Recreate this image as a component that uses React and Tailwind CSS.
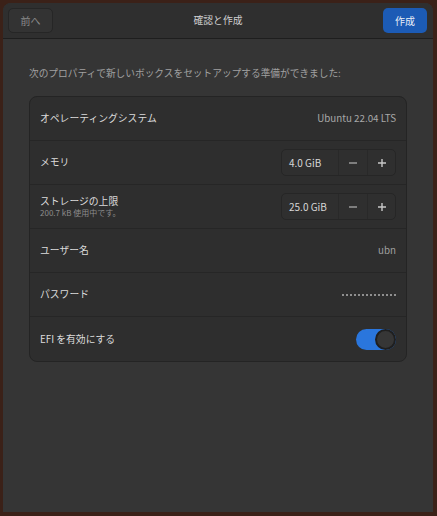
import React, { useState } from 'react';

const font = { fontFamily: '"Noto Sans CJK JP", "Noto Sans", sans-serif' };

const Row = ({ children, last }) => (
  <div
    className={`flex items-center justify-between h-[44px] px-[10px] ${
      last ? '' : 'border-b border-[#262626]'
    }`}
  >
    {children}
  </div>
);

const Stepper = ({ value }) => (
  <div className="flex items-stretch h-[27px] rounded-[5px] border border-[#262626] bg-[#2f2f2f] text-[10px] text-[#d6d6d6]">
    <div className="flex items-center w-[56px] pl-[7px]">{value}</div>
    <div className="flex items-center justify-center w-[29px] border-l border-[#292929] text-[#9a9a9a]">
      <svg width="10" height="10" viewBox="0 0 10 10">
        <path d="M1 5h8" stroke="currentColor" strokeWidth="1.4" />
      </svg>
    </div>
    <div className="flex items-center justify-center w-[28px] border-l border-[#292929] text-[#c8c8c8]">
      <svg width="10" height="10" viewBox="0 0 10 10">
        <path d="M1 5h8M5 1v8" stroke="currentColor" strokeWidth="1.4" />
      </svg>
    </div>
  </div>
);

const App = () => {
  const [efi, setEfi] = useState(true);
  const dots = Array.from({ length: 14 });

  return (
    <div className="w-[437px] h-[516px] bg-[#3b2118] pt-[3px] pl-[3px]" style={font}>
      <div className="w-[430px] h-[509px] bg-[#353535] rounded-t-[8px] overflow-hidden flex flex-col">
        {/* header bar */}
        <div className="h-[36px] shrink-0 flex items-center justify-between px-[5px] bg-[#2f2f2f] border-b border-[#1e1e1e]">
          <button className="h-[25px] w-[45px] rounded-[5px] border border-[#262626] bg-[#333333] text-[10px] text-[#8a8a8a]">
            前へ
          </button>
          <div className="text-[9.8px] text-[#cfcfcf]">確認と作成</div>
          <button className="h-[25px] w-[44px] mr-[1px] rounded-[5px] bg-[#1c5bb5] text-[10px] text-[#e8eef8]">
            作成
          </button>
        </div>

        {/* body */}
        <div className="px-[26px]">
          <p className="mt-[27px] text-[9.7px] text-[#a0a0a0] leading-[14px]">
            次のプロパティで新しいボックスをセットアップする準備ができました:
          </p>

          <div className="mt-[16px] rounded-[8px] border border-[#242424] bg-[#2e2e2e] text-[9.8px] text-[#dcdcdc]">
            <Row>
              <span>オペレーティングシステム</span>
              <span className="text-[#a8a8a8] text-[9.8px]">Ubuntu 22.04 LTS</span>
            </Row>
            <Row>
              <span>メモリ</span>
              <Stepper value="4.0 GiB" />
            </Row>
            <Row>
              <div className="flex flex-col">
                <div className="leading-[12px] h-[12px]">ストレージの上限</div>
                <div className="text-[8px] leading-[11px] h-[11px] text-[#8c8c8c]">
                  200.7 kB 使用中です。
                </div>
              </div>
              <Stepper value="25.0 GiB" />
            </Row>
            <Row>
              <span>ユーザー名</span>
              <span className="text-[#a0a0a0] text-[9.8px]">ubn</span>
            </Row>
            <Row>
              <span>パスワード</span>
              <div className="flex gap-[2px]">
                {dots.map((_, i) => (
                  <span key={i} className="w-[2px] h-[2px] rounded-full bg-[#b0b0b0]" />
                ))}
              </div>
            </Row>
            <Row last>
              <span>EFI を有効にする</span>
              <button
                onClick={() => setEfi(!efi)}
                className={`relative w-[40px] h-[21px] rounded-full ${
                  efi ? 'bg-[#2a76dd]' : 'bg-[#4a4a4a]'
                }`}
              >
                <span
                  className={`absolute top-0 w-[21px] h-[21px] rounded-full bg-[#363636] border-2 border-[#1f1f1f] ${
                    efi ? 'right-0' : 'left-0'
                  }`}
                />
              </button>
            </Row>
          </div>
        </div>
      </div>
    </div>
  );
};

export default App;
